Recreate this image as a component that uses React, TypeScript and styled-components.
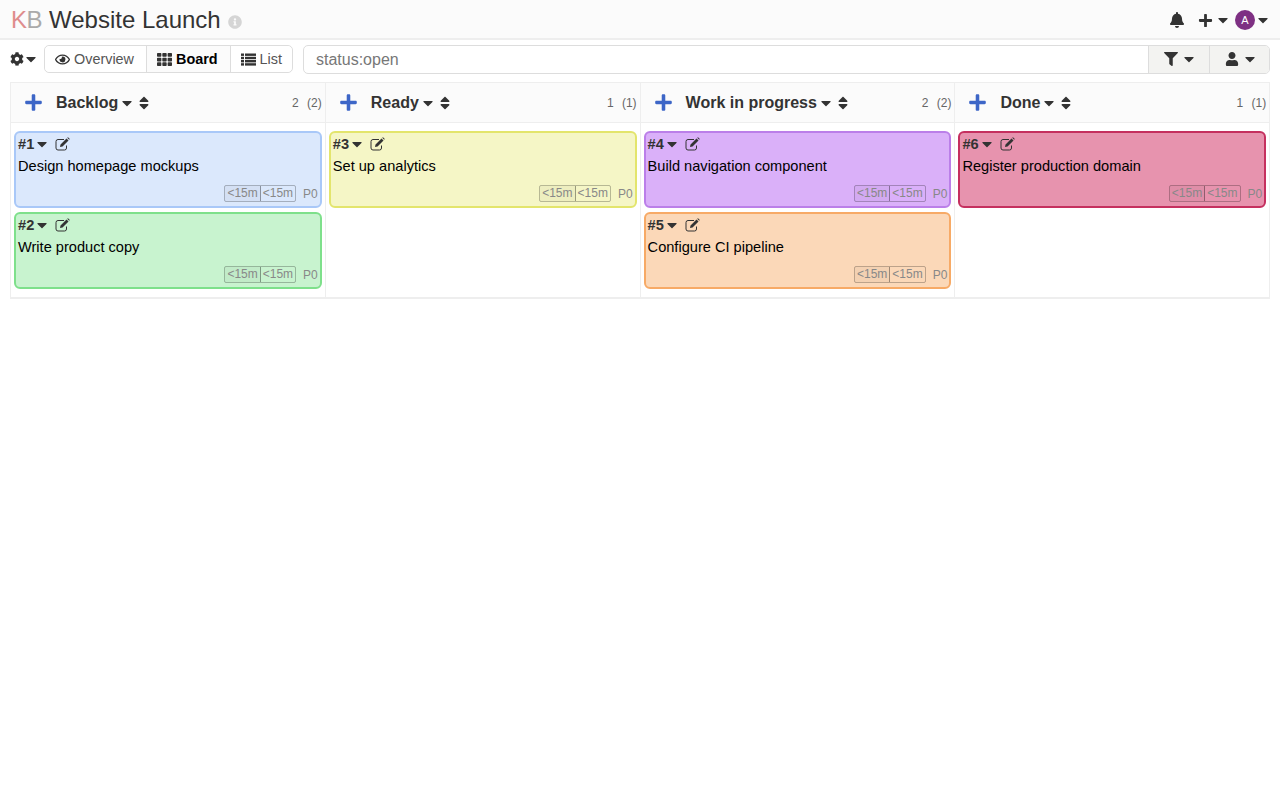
import * as React from 'react';
import styled, { createGlobalStyle } from 'styled-components';
import { FaBell, FaCaretDown, FaCog, FaFilter, FaInfoCircle, FaPlus, FaSort, FaTh, FaUser } from 'react-icons/fa';
import { FaRegEye } from 'react-icons/fa';

const GlobalStyle = createGlobalStyle`
  html, body {
    margin: 0;
    padding: 0;
    background: #fff;
    font-family: "Liberation Sans", Arial, sans-serif;
    color: #333;
  }
`;

const Header = styled.header`
  box-sizing: border-box;
  height: 40px;
  background: #fbfbfb;
  border-bottom: 2px solid #eee;
  display: flex;
  align-items: center;
  justify-content: space-between;
  padding: 2px 9px 0 11px;
`;

const Title = styled.div`
  display: flex;
  align-items: center;
  font-size: 24px;
  color: #333;
  white-space: nowrap;
`;

const Logo = styled.span`
  margin-right: 7px;
  letter-spacing: -0.5px;
  color: #aaa;
  b {
    font-weight: normal;
    color: #df8d8d;
  }
`;

const InfoIcon = styled(FaInfoCircle)`
  margin-left: 7px;
  margin-top: 4px;
  font-size: 14px;
  color: #d5d5d5;
`;

const HeaderMenu = styled.div`
  display: flex;
  align-items: center;
  font-size: 15px;
  color: #333;
`;

const HeaderIcon = styled.span<{ $gap: number }>`
  display: flex;
  align-items: center;
  margin-right: ${(p) => p.$gap}px;
`;

const BellIcon = styled(FaBell)`
  font-size: 16px;
`;

const Avatar = styled.span`
  width: 20px;
  height: 20px;
  border-radius: 50%;
  background: #7e3083;
  color: #fff;
  font-size: 11px;
  display: flex;
  align-items: center;
  justify-content: center;
`;

const Caret = styled(FaCaretDown)<{ $left?: number; $size?: number }>`
  font-size: ${(p) => p.$size ?? 16}px;
  margin-left: ${(p) => p.$left ?? 0}px;
  flex: none;
`;

const Toolbar = styled.div`
  display: flex;
  align-items: center;
  height: 30px;
  margin-top: 4px;
  padding: 0 10px;
`;

const Gear = styled.div`
  display: flex;
  align-items: center;
  width: 34px;
  font-size: 14px;
  color: #333;
`;

const Views = styled.div`
  display: flex;
  height: 26px;
  border: 1px solid #ddd;
  border-radius: 5px;
  background: #fff;
  margin-right: 10px;
`;

const ViewTab = styled.div<{ $active?: boolean }>`
  display: flex;
  align-items: center;
  gap: 4px;
  padding: 0 12px 0 10px;
  font-size: 14.4px;
  font-weight: ${(p) => (p.$active ? 'bold' : 'normal')};
  color: ${(p) => (p.$active ? '#000' : '#555')};
  background: ${(p) => (p.$active ? '#fbfbfb' : '#fff')};
  border-left: 1px solid #ddd;
  &:first-child {
    border-left: none;
    border-radius: 5px 0 0 5px;
  }
  &:last-child {
    padding-right: 10px;
    border-radius: 0 5px 5px 0;
  }
  svg {
    color: #333;
    font-size: 15px;
  }
`;

const Search = styled.div`
  flex: 1;
  display: flex;
  height: 27px;
  border: 1px solid #ddd;
  border-radius: 5px;
  overflow: hidden;
`;

const SearchText = styled.div`
  flex: 1;
  padding-left: 12px;
  font-size: 16px;
  line-height: 27px;
  color: #777;
`;

const SearchButton = styled.div<{ $width: number }>`
  width: ${(p) => p.$width}px;
  display: flex;
  align-items: center;
  justify-content: center;
  padding-left: 3px;
  box-sizing: border-box;
  background: #f3f3f1;
  border-left: 1px solid #ddd;
  color: #333;
  font-size: 14px;
`;

const Board = styled.div`
  display: grid;
  grid-template-columns: repeat(4, 314.8px);
  width: fit-content;
  margin: 8px 0 0 10px;
  border-top: 1px solid #eee;
  border-right: 1px solid #eee;
  border-bottom: 2px solid #eee;
`;

const ColumnHead = styled.div`
  height: 39px;
  background: #fbfbfb;
  border-bottom: 1px solid #eee;
  border-left: 1px solid #eee;
  display: flex;
  align-items: center;
  padding: 0 3px 0 13px;
  font-size: 16px;
  font-weight: bold;
  color: #333;
`;

const AddIcon = styled(FaPlus)`
  font-size: 19px;
  color: #3d66c7;
  margin-right: 13px;
  flex: none;
`;

const SortIcon = styled(FaSort)`
  font-size: 16px;
  margin-left: 1px;
`;

const Counts = styled.span`
  margin-left: auto;
  font-size: 12px;
  font-weight: normal;
  color: #666;
  word-spacing: 5px;
`;

const ColumnBody = styled.div`
  border-left: 1px solid #eee;
  padding: 8px 3px;
  display: flex;
  flex-direction: column;
  gap: 4px;
`;

const Card = styled.div<{ $bg: string; $line: string }>`
  box-sizing: border-box;
  height: 77px;
  background: ${(p) => p.$bg};
  border: 2px solid ${(p) => p.$line};
  border-radius: 6px;
  padding: 2px 2px;
  position: relative;
  color: #000;
`;

const CardTop = styled.div`
  display: flex;
  align-items: center;
  height: 17px;
  font-size: 14.6px;
  font-weight: bold;
  color: #333;
`;

const EditSvg = styled.svg`
  width: 15px;
  height: 14px;
  margin-left: 5px;
  flex: none;
`;

const EditIcon = () => (
  <EditSvg viewBox="0 0 15 14">
    <path
      d="M11.5 8.5v2.5a2 2 0 0 1-2 2H3a2 2 0 0 1-2-2V4.5a2 2 0 0 1 2-2h6"
      fill="none"
      stroke="currentColor"
      strokeWidth="1"
    />
    <path d="M5.5 7.5 11.5 1.5 13.5 3.5 7.5 9.5 5 10Z M12.2 0.8 13 0.2 14.8 2 14.2 2.8Z" fill="currentColor" />
  </EditSvg>
);

const ListSvg = styled.svg`
  width: 15px;
  height: 13px;
  flex: none;
`;

const ListIcon = () => (
  <ListSvg viewBox="0 0 15 13" fill="currentColor">
    <rect x="0" y="0.5" width="3" height="2.4" />
    <rect x="4" y="0.5" width="11" height="2.4" />
    <rect x="0" y="3.8" width="3" height="2.4" />
    <rect x="4" y="3.8" width="11" height="2.4" />
    <rect x="0" y="7" width="3" height="2.4" />
    <rect x="4" y="7" width="11" height="2.4" />
    <rect x="0" y="10.2" width="3" height="2.4" />
    <rect x="4" y="10.2" width="11" height="2.4" />
  </ListSvg>
);

const CardTitle = styled.div`
  margin-top: 6px;
  font-size: 14.6px;
  line-height: 16px;
`;

const CardFooter = styled.div`
  position: absolute;
  right: 2px;
  bottom: 4px;
  display: flex;
  align-items: center;
  font-size: 12px;
  color: #888;
`;

const Estimates = styled.div`
  display: flex;
  height: 15px;
  border: 1px solid rgba(0, 0, 0, 0.25);
  border-radius: 2px;
  margin-right: 7px;
  line-height: 15px;
  span {
    padding: 0 2px;
  }
  span:first-child {
    background: rgba(0, 0, 0, 0.03);
    border-right: 1px solid rgba(0, 0, 0, 0.35);
  }
`;

interface Task {
  id: number;
  title: string;
  bg: string;
  line: string;
}

const columns: { name: string; count: number; tasks: Task[] }[] = [
  {
    name: 'Backlog',
    count: 2,
    tasks: [
      { id: 1, title: 'Design homepage mockups', bg: '#dbe8fc', line: '#a9c8f8' },
      { id: 2, title: 'Write product copy', bg: '#c8f3cf', line: '#7ee08b' },
    ],
  },
  {
    name: 'Ready',
    count: 1,
    tasks: [{ id: 3, title: 'Set up analytics', bg: '#f5f6c6', line: '#e3e56c' }],
  },
  {
    name: 'Work in progress',
    count: 2,
    tasks: [
      { id: 4, title: 'Build navigation component', bg: '#dab0f9', line: '#bb7fe9' },
      { id: 5, title: 'Configure CI pipeline', bg: '#fbd8b8', line: '#f7aa66' },
    ],
  },
  {
    name: 'Done',
    count: 1,
    tasks: [{ id: 6, title: 'Register production domain', bg: '#e793ae', line: '#c5305f' }],
  },
];

const TaskCard = ({ task }: { task: Task }) => (
  <Card $bg={task.bg} $line={task.line}>
    <CardTop>
      #{task.id}
      <Caret />
      <EditIcon />
    </CardTop>
    <CardTitle>{task.title}</CardTitle>
    <CardFooter>
      <Estimates>
        <span>&lt;15m</span>
        <span>&lt;15m</span>
      </Estimates>
      P0
    </CardFooter>
  </Card>
);

export default function App() {
  return (
    <>
      <GlobalStyle />
      <Header>
        <Title>
          <Logo>
            <b>K</b>B
          </Logo>
          Website Launch
          <InfoIcon />
        </Title>
        <HeaderMenu>
          <HeaderIcon $gap={13}>
            <BellIcon />
          </HeaderIcon>
          <HeaderIcon $gap={4}>
            <FaPlus />
            <Caret $left={2} />
          </HeaderIcon>
          <Avatar>A</Avatar>
          <Caret />
        </HeaderMenu>
      </Header>
      <Toolbar>
        <Gear>
          <FaCog />
          <Caret $left={-1} />
        </Gear>
        <Views>
          <ViewTab>
            <FaRegEye />
            Overview
          </ViewTab>
          <ViewTab $active>
            <FaTh />
            Board
          </ViewTab>
          <ViewTab>
            <ListIcon />
            List
          </ViewTab>
        </Views>
        <Search>
          <SearchText>status:open</SearchText>
          <SearchButton $width={61}>
            <FaFilter />
            <Caret $left={3} />
          </SearchButton>
          <SearchButton $width={60}>
            <FaUser />
            <Caret $left={3} />
          </SearchButton>
        </Search>
      </Toolbar>
      <Board>
        {columns.map((c) => (
          <ColumnHead key={c.name}>
            <AddIcon />
            {c.name}
            <Caret $left={1} />
            <SortIcon />
            <Counts>
              {c.count} ({c.count})
            </Counts>
          </ColumnHead>
        ))}
        {columns.map((c) => (
          <ColumnBody key={c.name}>
            {c.tasks.map((t) => (
              <TaskCard key={t.id} task={t} />
            ))}
          </ColumnBody>
        ))}
      </Board>
    </>
  );
}
